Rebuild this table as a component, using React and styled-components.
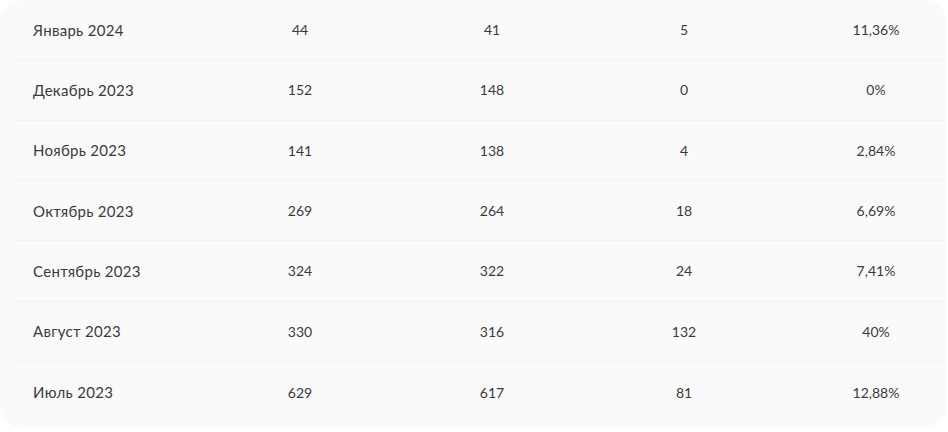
import React from 'react';
import styled, { createGlobalStyle } from 'styled-components';

const GlobalStyle = createGlobalStyle`
  body {
    margin: 0;
    background: #ffffff;
    font-family: Lato, "Noto Sans", sans-serif;
  }
`;

const Card = styled.div`
  width: 946px;
  height: 428px;
  background: #fafafa;
  border-radius: 22px;
  overflow: hidden;
  padding-left: 12px;
  box-sizing: border-box;
`;

const Table = styled.div`
  width: 960px;
  display: flex;
  flex-direction: column;
`;

const Row = styled.div`
  display: grid;
  grid-template-columns: repeat(5, 192px);
  align-items: center;
  height: 60.33px;
  box-sizing: border-box;
  border-bottom: ${(p) => (p.last ? 'none' : '1px solid #f2f2f2')};
`;

const Cell = styled.div`
  font-size: 14px;
  color: #3a3a3a;
  text-align: center;
`;

const MonthCell = styled(Cell)`
  font-size: 15px;
  letter-spacing: 0.3px;
  text-align: left;
  padding-left: 21px;
`;

const rows = [
  ['Январь 2024', '44', '41', '5', '11,36%'],
  ['Декабрь 2023', '152', '148', '0', '0%'],
  ['Ноябрь 2023', '141', '138', '4', '2,84%'],
  ['Октябрь 2023', '269', '264', '18', '6,69%'],
  ['Сентябрь 2023', '324', '322', '24', '7,41%'],
  ['Август 2023', '330', '316', '132', '40%'],
  ['Июль 2023', '629', '617', '81', '12,88%'],
];

const App = () => (
  <>
    <GlobalStyle />
    <Card>
      <Table>
        {rows.map(([month, ...nums], i) => (
          <Row key={month} last={i === rows.length - 1}>
            <MonthCell>{month}</MonthCell>
            {nums.map((v, j) => (
              <Cell key={j}>{v}</Cell>
            ))}
          </Row>
        ))}
      </Table>
    </Card>
  </>
);

export default App;
